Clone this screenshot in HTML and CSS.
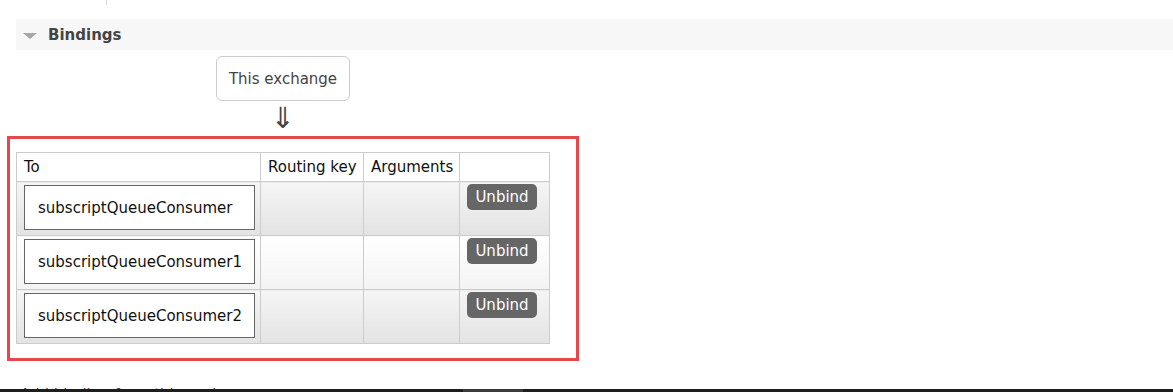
FILE: index.html
```html
<!DOCTYPE html>
<html>
<head>
<meta charset="utf-8">
<link rel="stylesheet" href="styles.css">
</head>
<body>
<div class="page">
  <div class="topline"></div>
  <div class="section-header">
    <span class="tri"></span>
    <span class="section-title">Bindings</span>
  </div>
  <div class="diagram">
    <div class="node">This exchange</div>
    <div class="arrow">&#8659;</div>
  </div>
  <div class="highlight">
    <table class="bindings">
      <colgroup>
        <col class="c-to">
        <col class="c-rk">
        <col class="c-args">
        <col class="c-act">
      </colgroup>
      <thead>
        <tr>
          <th>To</th>
          <th>Routing key</th>
          <th>Arguments</th>
          <th></th>
        </tr>
      </thead>
      <tbody>
        <tr class="alt1">
          <td><span class="queue">subscriptQueueConsumer</span></td>
          <td></td>
          <td></td>
          <td><span class="btn">Unbind</span></td>
        </tr>
        <tr class="alt2">
          <td><span class="queue">subscriptQueueConsumer1</span></td>
          <td></td>
          <td></td>
          <td><span class="btn">Unbind</span></td>
        </tr>
        <tr class="alt1">
          <td><span class="queue">subscriptQueueConsumer2</span></td>
          <td></td>
          <td></td>
          <td><span class="btn">Unbind</span></td>
        </tr>
      </tbody>
    </table>
  </div>
  <div class="next-heading">Add binding from this exchange</div>
</div>
<div class="taskbar"><span class="thumb"></span></div>
</body>
</html>
```

FILE: styles.css
```css
html, body {
  margin: 0;
  padding: 0;
  background: #fff;
  overflow: hidden;
}
body {
  font-family: "DejaVu Sans", Verdana, sans-serif;
  font-size: 15px;
  color: #444;
  width: 1173px;
  height: 392px;
}
.page {
  display: flex;
  flex-direction: column;
}
.topline {
  margin-left: 106px;
  width: 1px;
  height: 5px;
  background: #d4d4d4;
}
.section-header {
  margin-top: 14px;
  margin-left: 16px;
  height: 31px;
  background: #f7f7f7;
  display: flex;
  align-items: center;
  gap: 11px;
  padding-left: 7px;
}
.tri {
  width: 0;
  height: 0;
  border-left: 7px solid transparent;
  border-right: 7px solid transparent;
  border-top: 6px solid #a6a6a6;
  margin-top: 2px;
}
.section-title {
  font-weight: bold;
  font-size: 15px;
  color: #444;
}
.diagram {
  margin-left: 216px;
  margin-top: 6px;
  width: 134px;
  display: flex;
  flex-direction: column;
  align-items: center;
}
.node {
  box-sizing: border-box;
  width: 134px;
  height: 45px;
  border: 1px solid #cccccc;
  border-radius: 6px;
  display: flex;
  align-items: center;
  justify-content: center;
  color: #444;
  font-size: 15px;
}
.arrow {
  font-size: 29px;
  line-height: 35px;
  height: 35px;
  color: #444;
}
.highlight {
  box-sizing: border-box;
  margin-left: 7px;
  width: 572px;
  height: 225px;
  border: 3px solid #e5484b;
  padding: 13px 0 0 6px;
}
.bindings {
  border-collapse: collapse;
  width: 533px;
  table-layout: fixed;
}
.c-to { width: 244px; }
.c-rk { width: 103px; }
.c-args { width: 96px; }
.c-act { width: 90px; }
.bindings th, .bindings td {
  border: 1px solid #cccccc;
  padding: 0;
  vertical-align: top;
}
.bindings th {
  height: 28px;
  font-weight: normal;
  color: #111;
  text-align: left;
  padding-left: 7px;
  vertical-align: middle;
  background: #fff;
  white-space: nowrap;
}
.bindings td {
  height: 53px;
}
.alt1 td {
  background: linear-gradient(#f5f5f5, #e3e3e3);
}
.alt2 td {
  background: linear-gradient(#ffffff, #f3f3f3);
}
.queue {
  box-sizing: border-box;
  display: flex;
  align-items: center;
  margin: 3px 5px 0 7px;
  height: 45px;
  border: 1px solid #666;
  background: #fff;
  padding-left: 13px;
  color: #111;
  font-size: 15px;
  white-space: nowrap;
}
.btn {
  display: inline-flex;
  align-items: center;
  justify-content: center;
  margin: 2px 0 0 7px;
  width: 70px;
  height: 26px;
  border-radius: 5px;
  background: #666666;
  color: #fff;
  font-size: 15px;
}
.next-heading {
  margin-top: 25px;
  margin-left: 20px;
  font-size: 15px;
  color: #444;
}
.taskbar {
  position: fixed;
  left: 0;
  right: 0;
  bottom: 0;
  height: 3px;
  background: #1e1e1e;
}
.thumb {
  position: absolute;
  left: 463px;
  width: 60px;
  top: 0;
  height: 3px;
  background: #3a3a3a;
}
```
